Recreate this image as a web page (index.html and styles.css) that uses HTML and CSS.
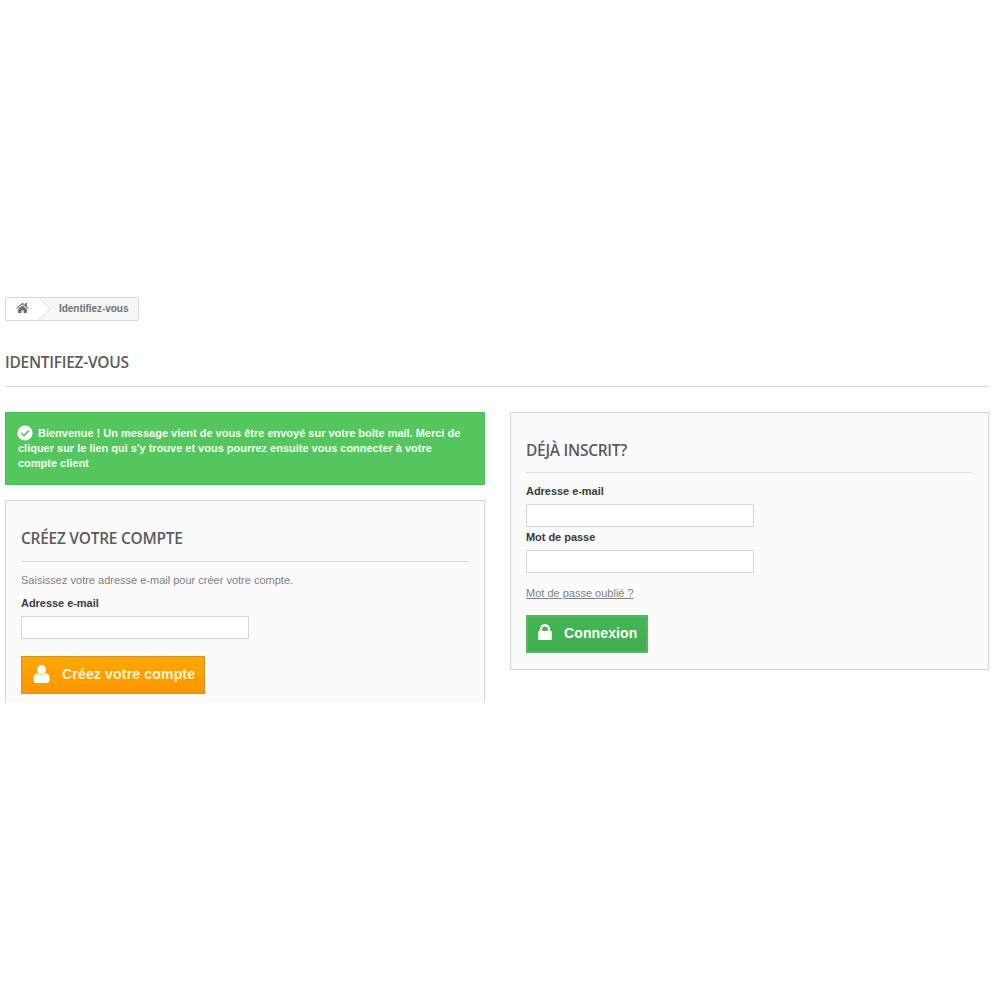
FILE: index.html
```html
<!DOCTYPE html>
<html lang="fr">
<head>
<meta charset="utf-8">
<title>Identifiez-vous</title>
<link rel="stylesheet" href="styles.css">
</head>
<body>
<main class="page">
  <nav class="breadcrumb">
    <a class="home" href="#" aria-label="Accueil">
      <svg class="home-icon" viewBox="0 0 14 12"><path d="M7 3.2 2.3 7.1V11.500H5.800V8.300H8.200V11.500H11.700V7.100Z"/><path d="M7 .3.2 6l.8.9L7 1.900l6 5 .8-.9-2-1.700V.7H10v2.100Z"/></svg>
    </a>
    <svg class="chevron" viewBox="0 0 13 22"><path class="chevron-fill" d="M0 0 12 11 0 22Z"/><path class="chevron-line" d="M.5 0 12 11 .5 22"/></svg>
    <span class="crumb">Identifiez-vous</span>
  </nav>
  <h1 class="page-heading">Identifiez-vous</h1>
  <div class="columns">
    <div class="left">
      <p class="alert"><svg class="check" viewBox="0 0 16 16"><circle cx="8" cy="8" r="7.600"/><path d="m4.300 7.900 2.700 2.600 4.800-4.800"/></svg>Bienvenue ! Un message vient de vous être envoyé sur votre boîte mail. Merci de<br>cliquer sur le lien qui s'y trouve et vous pourrez ensuite vous connecter à votre<br>compte client</p>
      <form class="box create">
        <h2 class="subheading">Créez votre compte</h2>
        <p class="intro">Saisissez votre adresse e-mail pour créer votre compte.</p>
        <label class="label" for="new-email">Adresse e-mail</label>
        <input class="field" id="new-email" type="text">
        <button class="button orange" type="button"><svg class="user" viewBox="0 0 17 18"><ellipse cx="8.500" cy="4.800" rx="4.500" ry="4.800"/><path d="M3.700 8C1.200 8.700.4 11.500.4 14.500.4 16.800 1.400 18 3.200 18H13.800c1.800 0 2.800-1.200 2.800-3.500 0-3-.8-5.800-3.300-6.500-2.500 2.600-7.100 2.600-9.600 0Z"/></svg><span>Créez votre compte</span></button>
      </form>
    </div>
    <form class="box login">
      <h2 class="subheading">Déjà inscrit?</h2>
      <label class="label" for="email">Adresse e-mail</label>
      <input class="field" id="email" type="text">
      <label class="label" for="password">Mot de passe</label>
      <input class="field" id="password" type="password">
      <a class="forgot" href="#">Mot de passe oublié ?</a>
      <button class="button green" type="button"><svg class="lock" viewBox="0 0 14 16"><path d="M3 8V5.200a4 4 0 0 1 8 0v2.800" fill="none" stroke="#fff" stroke-width="2.400"/><rect x=".2" y="7" width="13.600" height="9" rx=".8"/></svg><span>Connexion</span></button>
    </form>
  </div>
</main>
</body>
</html>
```
FILE: styles.css
```css
* { box-sizing: border-box; }
body {
  margin: 0;
  background: #fff;
  color: #808080;
  font: 11px/15px "Liberation Sans", Arial, sans-serif;
  white-space: nowrap;
}
h1, h2, p { margin: 0; }
svg { flex: none; fill: #fff; }
.page { width: 989px; height: 703px; padding: 297px 0 0 5px; overflow: hidden; }

.breadcrumb {
  display: flex;
  align-items: stretch;
  width: 134px;
  height: 24px;
  border: 1px solid #d9d7d7;
  border-radius: 2px;
  background: #f6f6f6;
  overflow: hidden;
}
.home { display: flex; width: 32px; padding: 4px 0 0 10px; background: #fff; }
.home-icon { width: 13px; height: 12px; fill: #6c6c6c; }
.chevron { width: 13px; height: 22px; }
.chevron-line { fill: none; stroke: #e2e2e2; }
.crumb { padding-left: 8px; color: #707070; font-weight: 700; font-size: 10px; line-height: 21px; letter-spacing: -.04px; }

.page-heading,
.subheading {
  border-bottom: 1px solid #d6d4d4;
  color: #5c5b5b;
  font: 600 15.5px/22px "Open Sans", sans-serif;
  letter-spacing: -.27px;
  text-transform: uppercase;
}
.page-heading { height: 66px; padding-top: 30px; }
.subheading { width: 100%; height: 61px; padding-top: 26px; }
.columns { display: flex; align-items: flex-start; gap: 25px; padding-top: 25px; }
.left { flex: none; width: 480px; }
.alert {
  height: 73px;
  padding: 13px 12px;
  border: 1px solid #4fb85a;
  background: #55c65e;
  color: #f4fff4;
  font-weight: 700;
  letter-spacing: -.01px;
}
.check { width: 16px; height: 16px; margin: -1px 5px -4px -1px; vertical-align: baseline; }
.check path { fill: none; stroke: #71b978; stroke-width: 1.7; }
.box { display: flex; flex-direction: column; align-items: flex-start; padding: 0 15px; border: 1px solid #d6d4d4; background: #fbfbfb; }
.create { height: 220px; margin-top: 15px; }
.login { width: 479px; height: 258px; }
.login .subheading { height: 60px; border-color: #dedede; }
.intro { margin-top: 11px; }
.label { color: #3a3a3a; font-weight: 700; letter-spacing: -.04px; }
.create .label { margin-top: 8px; }
.login .label { margin-top: 11px; }
.login .field + .label { margin-top: 3px; }
.field { width: 228px; height: 23px; margin: 5px 0 0; padding: 0 4px; border: 1px solid #d6d4d4; background: #fff; }
.forgot { margin-top: 13px; color: #808080; text-decoration: underline; }
.button {
  display: flex;
  align-items: center;
  padding: 0 0 2px;
  color: #fff;
  font: 700 14px/18px "Liberation Sans", Arial, sans-serif;
  height: 38px;
}
.orange { width: 184px; margin-top: 17px; padding-left: 11px; border: 1px solid #ce9430; background: linear-gradient(#fda802, #fe9600); color: #fff6d0; letter-spacing: .18px; }
.user { width: 17px; height: 18px; margin-right: 12px; }
.green { width: 122px; margin-top: 14px; padding-left: 11px; border: 1px solid #5cb06a; background: linear-gradient(#43b754, #41ad52); box-shadow: inset 0 0 0 1px #52b862; letter-spacing: .12px; }
.lock { width: 14px; height: 16px; margin: -2px 12px 0 0; }
```
